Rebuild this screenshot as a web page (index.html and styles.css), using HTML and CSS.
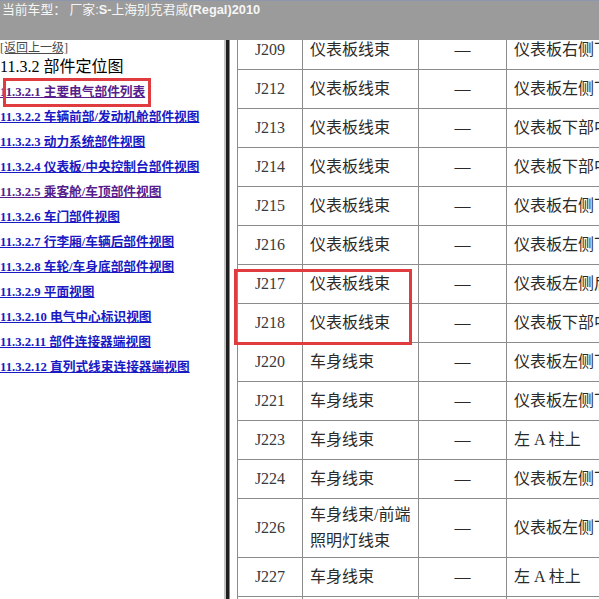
FILE: index.html
```html
<!DOCTYPE html>
<html lang="zh-CN">
<head>
<meta charset="utf-8">
<title>部件定位图</title>
<link rel="stylesheet" href="styles.css">
</head>
<body>
<div class="page">
  <header class="topbar">当前车型： 厂家:<b>S-</b>上海别克君威<b>(Regal)2010</b></header>
  <div class="main">
    <nav class="side">
      <div class="back"><a href="#">[返回上一级]</a></div>
      <div class="title">11.3.2 部件定位图</div>
      <ul class="links">
        <li><a class="visited" href="#">11.3.2.1 主要电气部件列表</a></li>
        <li><a href="#">11.3.2.2 车辆前部/发动机舱部件视图</a></li>
        <li><a href="#">11.3.2.3 动力系统部件视图</a></li>
        <li><a href="#">11.3.2.4 仪表板/中央控制台部件视图</a></li>
        <li><a class="visited" href="#">11.3.2.5 乘客舱/车顶部件视图</a></li>
        <li><a href="#">11.3.2.6 车门部件视图</a></li>
        <li><a href="#">11.3.2.7 行李厢/车辆后部件视图</a></li>
        <li><a href="#">11.3.2.8 车轮/车身底部部件视图</a></li>
        <li><a href="#">11.3.2.9 平面视图</a></li>
        <li><a href="#">11.3.2.10 电气中心标识视图</a></li>
        <li><a href="#">11.3.2.11 部件连接器端视图</a></li>
        <li><a href="#">11.3.2.12 直列式线束连接器端视图</a></li>
      </ul>
    </nav>
    <div class="divider"></div>
    <div class="content">
      <table class="parts">
        <colgroup>
          <col class="c-code"><col class="c-harness"><col class="c-dash"><col class="c-loc">
        </colgroup>
        <tbody>
          <tr><td class="code">J209</td><td>仪表板线束</td><td class="dash">—</td><td>仪表板右侧下部</td></tr>
          <tr><td class="code">J212</td><td>仪表板线束</td><td class="dash">—</td><td>仪表板左侧下部</td></tr>
          <tr><td class="code">J213</td><td>仪表板线束</td><td class="dash">—</td><td>仪表板下部中央</td></tr>
          <tr><td class="code">J214</td><td>仪表板线束</td><td class="dash">—</td><td>仪表板下部中央</td></tr>
          <tr><td class="code">J215</td><td>仪表板线束</td><td class="dash">—</td><td>仪表板右侧下部</td></tr>
          <tr><td class="code">J216</td><td>仪表板线束</td><td class="dash">—</td><td>仪表板左侧下部</td></tr>
          <tr><td class="code">J217</td><td>仪表板线束</td><td class="dash">—</td><td>仪表板左侧后部</td></tr>
          <tr><td class="code">J218</td><td>仪表板线束</td><td class="dash">—</td><td>仪表板下部中央</td></tr>
          <tr><td class="code">J220</td><td>车身线束</td><td class="dash">—</td><td>仪表板左侧下部</td></tr>
          <tr><td class="code">J221</td><td>车身线束</td><td class="dash">—</td><td>仪表板左侧下部</td></tr>
          <tr><td class="code">J223</td><td>车身线束</td><td class="dash">—</td><td>左 A 柱上</td></tr>
          <tr><td class="code">J224</td><td>车身线束</td><td class="dash">—</td><td>仪表板左侧下部</td></tr>
          <tr><td class="code">J226</td><td>车身线束/前端<br>照明灯线束</td><td class="dash">—</td><td>仪表板左侧下部</td></tr>
          <tr><td class="code">J227</td><td>车身线束</td><td class="dash">—</td><td>左 A 柱上</td></tr>
          <tr><td class="code">J228</td><td>车身线束</td><td class="dash">—</td><td>左 A 柱上</td></tr>
        </tbody>
      </table>
    </div>
  </div>
</div>
<div class="mark mark-link"></div>
<div class="mark mark-rows"></div>
</body>
</html>
```

FILE: styles.css
```css
html, body {
  margin: 0;
  padding: 0;
  background: #ffffff;
}

.page {
  width: 599px;
  height: 599px;
  overflow: hidden;
  display: flex;
  flex-direction: column;
}

.topbar {
  height: 40px;
  flex: none;
  background: #9b9b9b;
  border-top: 1px solid #8e96ad;
  box-sizing: border-box;
  color: #f6f6f6;
  font-family: "Liberation Sans", "Noto Sans CJK SC", sans-serif;
  font-size: 12.8px;
  line-height: 17px;
  padding-left: 2px;
  white-space: nowrap;
  overflow: hidden;
}

.topbar b {
  font-weight: bold;
}

.main {
  flex: 1;
  display: flex;
  min-height: 0;
}

.side {
  width: 224px;
  flex: none;
  background: #ffffff;
  overflow: hidden;
}

.back {
  font-family: "Liberation Serif", "Noto Sans CJK SC", serif;
  font-size: 12px;
  line-height: 16px;
}

.back a {
  color: #4a4a4a;
  text-decoration: underline;
}

.title {
  font-family: "Liberation Serif", "Noto Sans CJK SC", serif;
  font-size: 16px;
  line-height: 21px;
  color: #000000;
}

.links {
  list-style: none;
  margin: 0;
  padding: 1px 0 0 0;
}

.links li {
  line-height: 25px;
  height: 25px;
  white-space: nowrap;
}

.links a {
  font-family: "Liberation Serif", "Noto Sans CJK SC", serif;
  font-weight: bold;
  font-size: 12.7px;
  color: #1a1ac4;
  text-decoration: underline;
}

.links a.visited {
  color: #561d8c;
}

.divider {
  flex: none;
  width: 3px;
  background: #1e1e1e;
  border-left: 2px solid #c4c4c4;
  border-right: 1px solid #8a8a8a;
}

.content {
  flex: 1;
  overflow: hidden;
  padding-left: 7px;
}

.parts {
  border-collapse: collapse;
  table-layout: fixed;
  width: 470px;
  margin-top: -10px;
  font-family: "Liberation Serif", "Noto Sans CJK SC", serif;
  font-size: 16px;
  color: #2a2a2a;
}

.c-code { width: 65px; }
.c-harness { width: 116px; }
.c-dash { width: 88px; }
.c-loc { width: 201px; }

.parts td {
  border: 1px solid #8c8c8c;
  height: 39px;
  box-sizing: border-box;
  padding: 3px 7px;
  line-height: 26px;
  vertical-align: middle;
  white-space: nowrap;
  overflow: hidden;
}

.parts td.code {
  text-align: center;
  color: #3a3a3a;
  padding: 3px 0;
}

.parts td.dash {
  text-align: center;
  padding: 3px 0;
}

.mark {
  position: absolute;
  border: 3px solid #e03b3e;
  box-sizing: border-box;
}

.mark-link {
  left: 3px;
  top: 78px;
  width: 148px;
  height: 29px;
}

.mark-rows {
  left: 234px;
  top: 269px;
  width: 178px;
  height: 76px;
}
```
